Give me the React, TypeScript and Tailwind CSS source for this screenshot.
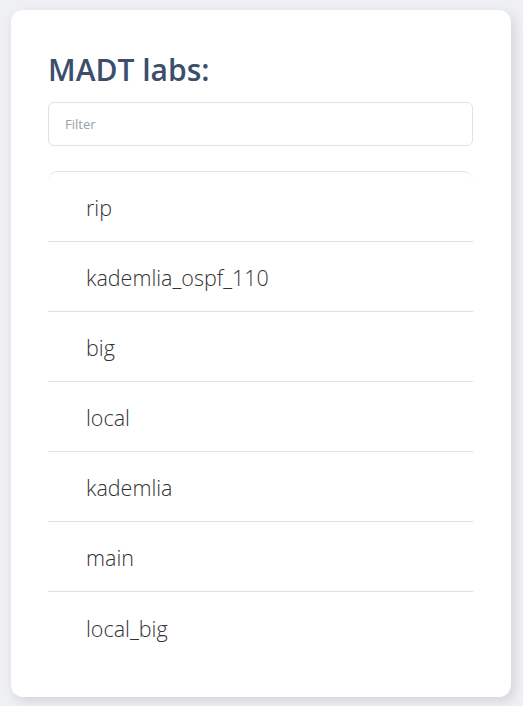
import { useState } from 'react';

const labs = ['rip', 'kademlia_ospf_110', 'big', 'local', 'kademlia', 'main', 'local_big'];

export default function App() {
  const [filter, setFilter] = useState('');
  const shown = labs.filter((l) => l.includes(filter));

  return (
    <div className="min-h-[706px] bg-[#eef0f3] pt-[10px] pb-[10px] pl-[11px] pr-[12px] font-['Open_Sans',sans-serif]">
      <div className="rounded-[12px] bg-white pl-[37px] pr-[38px] pt-[40px] pb-[35px] shadow-[3px_4px_12px_rgba(0,0,0,0.12)]">
        <h1 className="text-[30px] font-semibold leading-[40px] text-[#3b4e6b]">MADT labs:</h1>
        <input
          value={filter}
          onChange={(e) => setFilter(e.target.value)}
          placeholder="Filter"
          className="mt-[12px] h-[44px] w-full rounded-[6px] border border-[#dfe1ea] px-[16px] text-[13px] text-[#333] outline-none placeholder:text-[#9aa0a8]"
        />
        {/* Labs list */}
        <ul className="mt-[25px] rounded-t-[10px] border-t border-[#e3e3e3]">
          {shown.map((lab, i) => (
            <li
              key={lab}
              className={
                'flex h-[70px] items-center pl-[38px] pt-[4px] text-[21.5px] font-light text-[#333] ' +
                (i < shown.length - 1 ? 'border-b border-[#e0e0e0]' : '')
              }
            >
              {lab}
            </li>
          ))}
        </ul>
      </div>
    </div>
  );
}
